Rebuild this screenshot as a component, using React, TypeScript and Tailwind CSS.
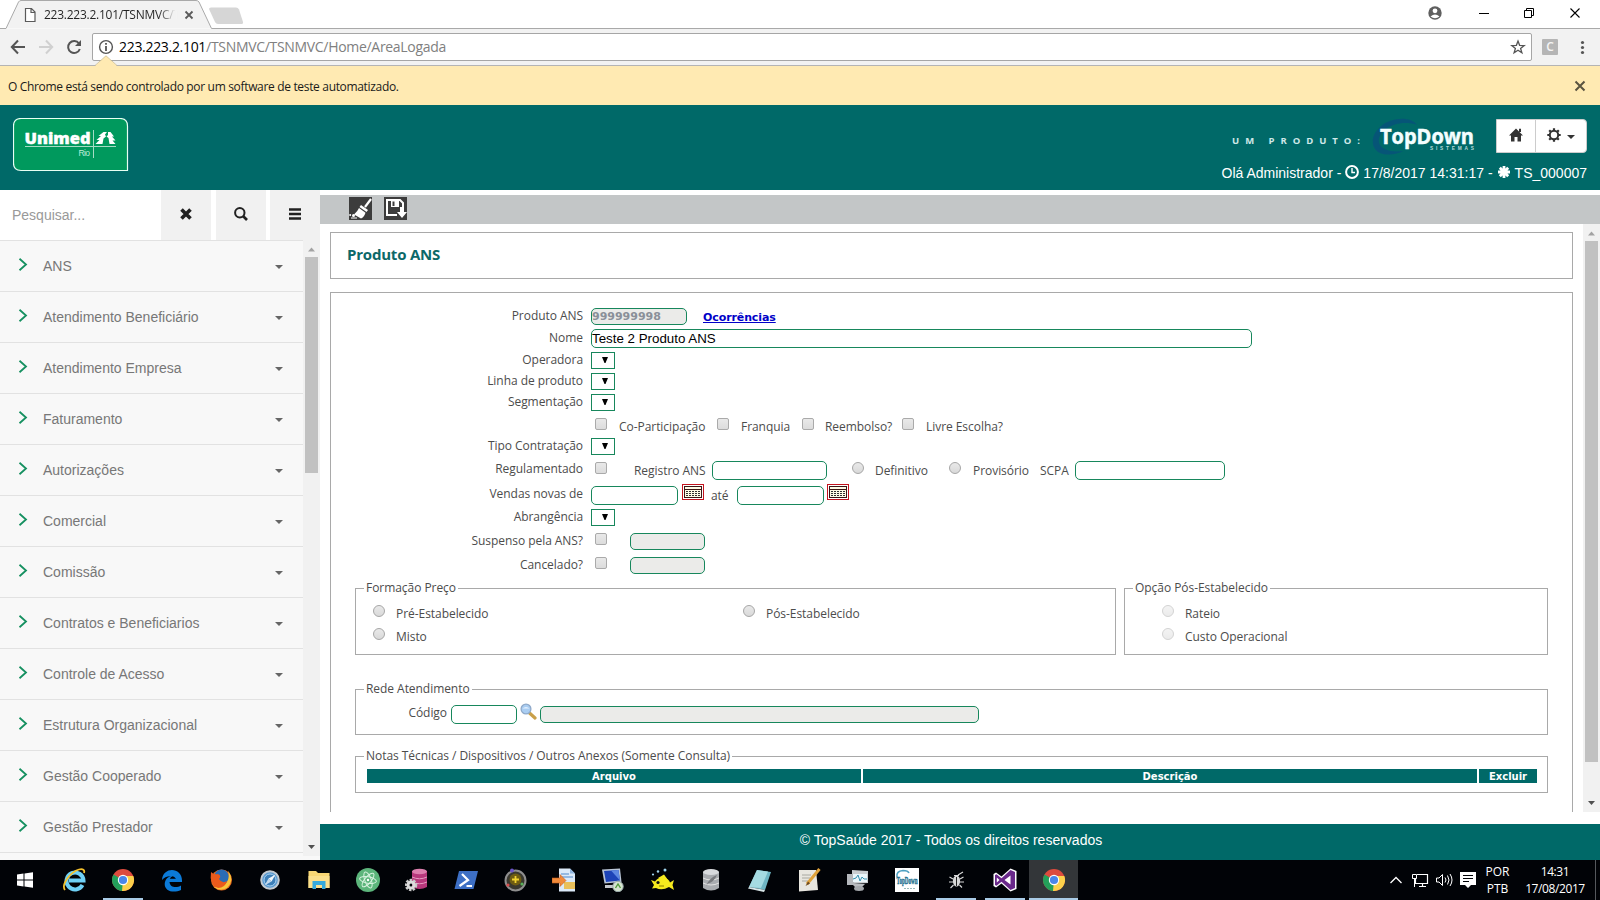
import type { ReactNode } from "react";

const menu = [
  "ANS",
  "Atendimento Beneficiário",
  "Atendimento Empresa",
  "Faturamento",
  "Autorizações",
  "Comercial",
  "Comissão",
  "Contratos e Beneficiarios",
  "Controle de Acesso",
  "Estrutura Organizacional",
  "Gestão Cooperado",
  "Gestão Prestador",
];

const ui = "font-['Open_Sans','Noto_Sans',sans-serif]";

/* ---------- browser chrome ---------- */

function TabStrip() {
  return (
    <div className="flex h-[29px] items-start bg-white">
      <div className="relative h-[29px] w-[1420px] shrink-0">
        <svg width="1420" height="29" className="block">
          <path d="M0 28.5H6L18.5 2Q19.5 .5 21 .5H196Q198 .5 199 2L211.500 28.500H1420" fill="#f2f2f2" stroke="#a9a9a9" />
          <path d="M211 7.500H236Q238 7.500 239 9.500L243 22Q243.500 24 241 24H218Q216 24 215 22L209 9Q209 7.500 211 7.500Z" fill="#d6d6d6" />
          <path d="M25.500 8.500H31.500L35 12V21.500H25.500ZM31 8.500V12.500H35" fill="#fff" stroke="#5a5a5a" strokeWidth="1.200" />
          <path d="M185.500 11.500L192.500 18.500M192.500 11.500L185.500 18.500" stroke="#5a5a5a" strokeWidth="1.800" />
        </svg>
        <div className={`absolute top-[6px] left-[44px] w-[134px] whitespace-nowrap bg-gradient-to-r from-[#222] from-85% to-[#f2f2f2] to-98% bg-clip-text text-[12px] leading-[17px] tracking-[-0.25px] text-transparent ${ui}`}>
          223.223.2.101/TSNMVC/T
        </div>
      </div>
      <svg width="180" height="29" className="block">
        <path d="M0 28.500H180" stroke="#a9a9a9" />
        <circle cx="15" cy="13" r="6.700" fill="#5f5f5f" />
        <circle cx="15" cy="10.800" r="2.400" fill="#fff" />
        <path d="M10.500 16.500Q15 12.500 19.500 16.500Q15 20 10.500 16.500Z" fill="#fff" />
        <path d="M59 13.500H69" stroke="#000" />
        <path d="M104.500 10.500H111.500V17.500H104.500ZM106.500 10.500V8.500H113.500V15.500H111.500" fill="none" stroke="#000" />
        <path d="M150.500 8.500L159.500 17.500M159.500 8.500L150.500 17.500" stroke="#000" strokeWidth="1.100" />
      </svg>
    </div>
  );
}

function AddressBar() {
  return (
    <div className="flex h-[37px] items-start border-b border-[#b4b4b4] bg-[#f2f2f2]">
      <svg width="92" height="36" className="block shrink-0">
        <path d="M12 18H25M18 11.500L11.800 18L18 24.500" fill="none" stroke="#555" strokeWidth="2" />
        <path d="M39 18H52M46 11.500L52.200 18L46 24.500" fill="none" stroke="#d0d0d0" strokeWidth="2" />
        <path d="M79 14.500A6 6 0 1 0 79.800 20" fill="none" stroke="#555" strokeWidth="2" />
        <path d="M81 11V17H75Z" fill="#555" />
      </svg>
      <div className="mt-[4px] flex h-[28px] w-[1440px] items-center rounded-[2px] border border-[#a6a6a6] bg-white">
        <svg width="26" height="26" className="block shrink-0">
          <circle cx="13" cy="13" r="6.400" fill="none" stroke="#555" strokeWidth="1.400" />
          <path d="M13 12V17M13 9V10.700" stroke="#555" strokeWidth="1.800" />
        </svg>
        <div className={`flex-1 whitespace-nowrap text-[14px] leading-[18px] tracking-[-0.31px] text-[#808080] ${ui}`}>
          <span className="text-black">223.223.2.101</span>/TSNMVC/TSNMVC/Home/AreaLogada
        </div>
        <svg width="26" height="26" className="block shrink-0">
          <path d="M13 7L14.600 11.300L19.200 11.500L15.600 14.400L16.900 18.800L13 16.300L9.100 18.800L10.400 14.400L6.800 11.500L11.400 11.300Z" fill="none" stroke="#555" strokeWidth="1.300" />
        </svg>
      </div>
      <div className="mt-[10px] ml-[10px] flex h-4 w-4 items-center justify-center rounded-[1px] bg-[#b5b5b5] font-['Open_Sans',sans-serif] text-[12px] leading-none font-semibold text-[#f4f4f4]">
        C
      </div>
      <svg width="40" height="36" className="block">
        <g fill="#555">
          <circle cx="24.500" cy="13.500" r="1.600" />
          <circle cx="24.500" cy="18.500" r="1.600" />
          <circle cx="24.500" cy="23.500" r="1.600" />
        </g>
      </svg>
    </div>
  );
}

function InfoBar() {
  return (
    <div className="relative flex h-[39px] items-center justify-between bg-[#ffeab2] pl-2">
      <svg width="22" height="12" className="absolute -top-[11px] left-[95px]">
        <path d="M0 11L11 .8L22 11V12H0Z" fill="#ffeab2" />
        <path d="M0 10.500L11 .8L22 10.500" fill="none" stroke="#c9b98a" strokeWidth=".7" />
      </svg>
      <span className={`mt-[2px] whitespace-nowrap text-[12px] leading-4 tracking-[-0.33px] text-[#1a1a1a] ${ui}`}>
        O Chrome está sendo controlado por um software de teste automatizado.
      </span>
      <svg width="40" height="39" className="block">
        <path d="M15.500 15.500L24.500 24.500M24.500 15.500L15.500 24.500" stroke="#5a5440" strokeWidth="2" />
      </svg>
    </div>
  );
}

/* ---------- application header ---------- */

function UnimedLogo() {
  return (
    <svg width="116" height="54" viewBox="0 0 116 54" className="block">
      <path d="M8 .5H107Q114.500 .5 114.500 8V52.500H8Q.5 52.500 .5 45V8Q.5 .5 8 .5Z" fill="#00995d" stroke="#e8fff4" strokeWidth="1.200" />
      <text x="11.500" y="26" fontFamily="Open Sans" fontWeight="800" fontSize="15.500" fill="#fff" stroke="#fff" strokeWidth=".4" textLength="66" lengthAdjust="spacingAndGlyphs">Unimed</text>
      <text x="65.500" y="37.500" fontFamily="Liberation Sans" fontSize="8.500" fill="#bfeeda" textLength="11.500">Rio</text>
      <path d="M12 28.500H103M80.500 12V40" stroke="#a6dcc4" />
      <path d="M90.500 14H94L92 16.500L93 18.500L90.500 20.500L89.500 26H82.500L86.500 22H83.500L88 18H85.500Z" fill="#fff" />
      <path d="M95 14H97.500L101 18.500H99L102.500 22.500H99.500L102.500 26H96.500L95.500 20L93.500 18.500L95 17Z" fill="#fff" />
    </svg>
  );
}

function TopDownLogo() {
  return (
    <svg width="250" height="40" viewBox="0 0 250 40" className="block">
      <path d="M189 7C183 -2 163 -1 152 9C141 19 143 33 155 36C162 37.500 170 36 175 33C164 34.500 153 32 151 25C149 15 162 5 177 5C182 5 186 5.500 189 7Z" fill="#07527a" opacity=".85" />
      <text x="4" y="25.500" fontFamily="Open Sans" fontWeight="700" fontSize="9.500" fill="#cfe8e8" textLength="128">UM PRODUTO:</text>
      <text x="152" y="26" fontFamily="Open Sans" fontWeight="700" fontSize="20.500" fill="#f4ffff" stroke="#f4ffff" strokeWidth=".5" textLength="94" lengthAdjust="spacingAndGlyphs">TopDown</text>
      <text x="202" y="31.500" fontFamily="Liberation Sans" fontWeight="700" fontSize="4.800" fill="#b6dada" textLength="44">SISTEMAS</text>
    </svg>
  );
}

function Header() {
  return (
    <header className="flex h-[85px] justify-between bg-[#006968]">
      <div className="pt-[13px] pl-[13px]">
        <UnimedLogo />
      </div>
      <div className="flex flex-col items-end pt-[14px] pr-[13px]">
        <div className="flex h-[34px]">
          <div className="mr-[18px] -mt-px">
            <TopDownLogo />
          </div>
          <div className="flex h-[34px] w-[91px] rounded-r-[4px] border border-[#ccc] bg-white">
            <div className="flex w-[39px] items-center justify-center border-r border-[#ccc] pb-[2px]">
              <svg width="14" height="14" viewBox="0 0 14 14">
                <path d="M7 .5L14 7.500H12V13.500H8.500V9H5.500V13.500H2V7.500H0ZM10 .8H12V4H10Z" fill="#333" />
              </svg>
            </div>
            <div className="flex flex-1 items-center justify-center gap-[6px] pb-[2px]">
              <svg width="14" height="14" viewBox="0 0 14 14">
                <circle cx="7" cy="7" r="4.200" fill="none" stroke="#333" strokeWidth="2" />
                <path d="M7 .3V2.500M7 11.500V13.700M.3 7H2.500M11.500 7H13.700M2.200 2.200L3.800 3.800M10.200 10.200L11.800 11.800M11.800 2.200L10.200 3.800M3.800 10.200L2.200 11.800" stroke="#333" strokeWidth="2.200" />
              </svg>
              <svg width="8" height="4" className="mt-[3px]">
                <path d="M0 0H8L4 4Z" fill="#333" />
              </svg>
            </div>
          </div>
        </div>
        <div className="mt-[10px] flex items-center gap-[4px] font-['Liberation_Sans',Arial,sans-serif] text-[14px] leading-5 whitespace-nowrap text-white">
          <span>Olá Administrador -</span>
          <svg width="14" height="14" viewBox="0 0 14 14" className="-mt-[2px]">
            <circle cx="7" cy="7" r="5.900" fill="none" stroke="#fff" strokeWidth="2" />
            <path d="M7 3V7.500H10" fill="none" stroke="#fff" strokeWidth="1.400" />
          </svg>
          <span>17/8/2017 14:31:17 -</span>
          <svg width="14" height="14" viewBox="0 0 14 14" className="-mt-[2px]">
            <path d="M7 1V13M1 7H13M2.800 2.800L11.200 11.200M11.200 2.800L2.800 11.200" stroke="#fff" strokeWidth="2.800" />
          </svg>
          <span>TS_000007</span>
        </div>
      </div>
    </header>
  );
}

/* ---------- sidebar ---------- */

function Sidebar() {
  return (
    <aside className="flex h-[670px] w-[320px] shrink-0 flex-col overflow-hidden font-['Liberation_Sans',Arial,sans-serif]">
      <div className="flex h-[50px] shrink-0 bg-white">
        <div className="w-[161px] pt-[15px] pl-[12px] text-[14px] leading-5 text-[#999]">Pesquisar...</div>
        <div className="mr-[5px] flex w-[50px] justify-center bg-[#f1f1f1] pt-[18px]">
          <svg width="12" height="12" viewBox="0 0 12 12">
            <path d="M1.500 1.500L10.500 10.500M10.500 1.500L1.500 10.500" stroke="#222" strokeWidth="3.600" />
          </svg>
        </div>
        <div className="mr-[4px] flex w-[50px] justify-center bg-[#f1f1f1] pt-[17px]">
          <svg width="14" height="14" viewBox="0 0 14 14">
            <circle cx="5.800" cy="5.800" r="4.700" fill="none" stroke="#222" strokeWidth="2" />
            <path d="M9 9L13 13" stroke="#222" strokeWidth="2.600" />
          </svg>
        </div>
        <div className="flex w-[50px] justify-center bg-[#f1f1f1] pt-[18px]">
          <svg width="12" height="12" viewBox="0 0 12 12">
            <path d="M0 1.500H12M0 6H12M0 10.500H12" stroke="#222" strokeWidth="2.600" />
          </svg>
        </div>
      </div>
      <div className="flex h-[620px] items-start bg-[#f8f8f8]">
        <ul className="h-[620px] w-[303px] overflow-hidden bg-[#f8f8f8]">
          {menu.map((m) => (
            <li key={m} className="flex h-[51px] items-center border-t border-[#e2e2e2] pl-[18px] text-[14px] leading-5 text-[#777]">
              <svg width="10" height="13" viewBox="0 0 10 13" className="-mt-[3px] mr-[15px] shrink-0">
                <path d="M1.500 .8L8 6.500L1.500 12.200" fill="none" stroke="#159060" strokeWidth="1.800" />
              </svg>
              <span className="flex-1 pb-px">{m}</span>
              <svg width="8" height="4" className="mt-[2px] mr-5">
                <path d="M0 0H8L4 4Z" fill="#666" />
              </svg>
            </li>
          ))}
          <li className="h-[8px] border-t border-[#e2e2e2]" />
        </ul>
        <ScrollBar height="h-[616px]" thumb="h-[216px]" />
      </div>
    </aside>
  );
}

function ScrollBar({ height, thumb }: { height: string; thumb: string }) {
  return (
    <div className={`flex w-[17px] shrink-0 flex-col items-center justify-between bg-[#f1f1f1] ${height}`}>
      <div className="flex w-full flex-col items-center">
        <svg width="17" height="17" className="block">
          <path d="M5 11.500H12L8.500 7.500Z" fill="#a3a3a3" />
        </svg>
        <div className={`w-[13px] bg-[#c1c1c1] ${thumb}`} />
      </div>
      <svg width="17" height="17" className="block">
        <path d="M5 6H12L8.500 10Z" fill="#505050" />
      </svg>
    </div>
  );
}

/* ---------- form ---------- */

const label = "font-['Open_Sans','Noto_Sans',sans-serif] text-[12px] leading-4 font-medium text-[#4c4c4c] whitespace-nowrap tracking-[-0.05px]";

function Row({ h, text, mt, children }: { h: string; text?: string; mt?: string; children?: ReactNode }) {
  return (
    <div className={`flex items-start ${h}`}>
      <div className={`w-[228px] shrink-0 text-right ${label} ${mt ?? ""}`}>{text}</div>
      <div className="flex items-start pl-[8px]">{children}</div>
    </div>
  );
}

function Field({ className, off, children }: { className: string; off?: boolean; children?: ReactNode }) {
  return (
    <div className={`shrink-0 rounded-[5px] border border-[#17875c] ${off ? "h-[17px] bg-[#ebebe9]" : "h-[19px] bg-white"} ${className}`}>
      {children}
    </div>
  );
}

function Select() {
  return (
    <div className="flex h-[17px] w-6 items-start justify-end border border-[#17875c] bg-white pt-[4px] pr-[6px]">
      <svg width="6" height="6">
        <path d="M0 0H6L3.500 6H2.500Z" fill="#000" />
      </svg>
    </div>
  );
}

function Check({ className = "" }: { className?: string }) {
  return <div className={`h-[12px] w-[12px] shrink-0 rounded-[2px] border border-[#aaa] bg-gradient-to-b from-[#e9e9e9] to-[#dcdcdc] ${className}`} />;
}

function Radio({ className = "" }: { className?: string }) {
  return <div className={`h-[12px] w-[12px] shrink-0 rounded-full border border-[#a6a6a6] bg-gradient-to-b from-[#e9e9e9] to-[#d9d9d9] ${className}`} />;
}

function L({ className = "", children }: { className?: string; children: ReactNode }) {
  return <span className={`${label} ${className}`}>{children}</span>;
}

function Calendar({ className = "" }: { className?: string }) {
  return (
    <svg width="22" height="16" viewBox="0 0 22 16" className={`block shrink-0 ${className}`}>
      <rect x=".5" y=".5" width="21" height="15" fill="#fff" stroke="#c4141e" />
      <rect x="2.500" y="2.500" width="17" height="11" fill="#fffbe6" stroke="#3a1515" />
      <path d="M3 5.500H19" stroke="#3a1515" />
      <path d="M4 7.500H18M4 9.500H18M4 11.500H18" stroke="#333" strokeDasharray="2 1" />
    </svg>
  );
}

function Fieldset({ title, className, children }: { title: string; className: string; children?: ReactNode }) {
  return (
    <fieldset className={`min-w-0 ${className}`}>
      <div className="relative h-full border border-[#a9a9a9]">
        <span className={`absolute -top-[9px] left-[8px] bg-white px-[2px] ${label}`}>{title}</span>
        {children}
      </div>
    </fieldset>
  );
}

function Form() {
  return (
    <div className="flex h-[588px]">
      <div className="flex-1 overflow-hidden bg-white pt-[8px] pr-[10px] pl-[10px]">
        <div className="h-[47px] border border-[#a9a9a9] pt-[11px] pl-[16px]">
          <h1 className="font-['Open_Sans','Noto_Sans',sans-serif] text-[15px] leading-5 font-bold tracking-[-0.2px] text-[#0c6868]">Produto ANS</h1>
        </div>
        <div className="mt-[13px] h-[560px] border border-[#a9a9a9] pt-[15px] pr-[24px] pl-[24px]">
          <Row h="h-[21px]" text="Produto ANS">
            <Field off className="w-[96px] font-['DejaVu_Sans',sans-serif] text-[11px] leading-[16px] font-bold text-[#8a9099]">
              999999998
            </Field>
            <a className="mt-[3px] ml-[16px] font-['DejaVu_Sans',sans-serif] text-[11px] leading-[14px] font-bold tracking-[-0.1px] text-[#0000c8] underline">Ocorrências</a>
          </Row>
          <Row h="h-[23px]" text="Nome" mt="mt-px">
            <Field className="w-[661px] font-['Liberation_Sans',Arial,sans-serif] text-[13.33px] leading-[17px] text-black">Teste 2 Produto ANS</Field>
          </Row>
          <Row h="h-[21px]" text="Operadora"><Select /></Row>
          <Row h="h-[21px]" text="Linha de produto"><Select /></Row>
          <Row h="h-[24px]" text="Segmentação"><Select /></Row>
          <Row h="h-[20px]">
            <Check className="ml-[4px]" />
            <L className="mt-px ml-[12px] w-[88px]">Co-Participação</L>
            <Check className="ml-[10px]" />
            <L className="mt-px ml-[12px] w-[50px]">Franquia</L>
            <Check className="ml-[11px]" />
            <L className="mt-px ml-[11px] w-[66px]">Reembolso?</L>
            <Check className="ml-[11px]" />
            <L className="mt-px ml-[12px]">Livre Escolha?</L>
          </Row>
          <Row h="h-[23px]" text="Tipo Contratação"><Select /></Row>
          <Row h="h-[25px]" text="Regulamentado">
            <Check className="mt-px ml-[4px]" />
            <L className="mt-[2px] ml-[27px] w-[78px]">Registro ANS</L>
            <Field className="w-[115px]" />
            <Radio className="mt-px ml-[25px]" />
            <L className="mt-[2px] ml-[11px] w-[74px]">Definitivo</L>
            <Radio className="mt-px" />
            <L className="mt-[2px] ml-[12px] w-[67px]">Provisório</L>
            <L className="mt-[2px] w-[35px]">SCPA</L>
            <Field className="w-[150px]" />
          </Row>
          <Row h="h-[23px]" text="Vendas novas de">
            <Field className="w-[87px]" />
            <Calendar className="-mt-[2px] ml-[4px]" />
            <L className="mt-[2px] ml-[7px] w-[26px]">até</L>
            <Field className="w-[87px]" />
            <Calendar className="-mt-[2px] ml-[3px]" />
          </Row>
          <Row h="h-[24px]" text="Abrangência"><Select /></Row>
          <Row h="h-[24px]" text="Suspenso pela ANS?">
            <Check className="ml-[4px]" />
            <Field off className="ml-[23px] w-[75px]" />
          </Row>
          <Row h="h-[31px]" text="Cancelado?">
            <Check className="ml-[4px]" />
            <Field off className="ml-[23px] w-[75px]" />
          </Row>
          <div className="flex justify-between">
            <Fieldset title="Formação Preço" className="h-[67px] w-[761px]">
              <div className="grid grid-cols-[370px_1fr] gap-y-[7px] pt-[16px] pl-[17px]">
                <div className="flex h-4"><Radio /><L className="mt-px ml-[11px]">Pré-Estabelecido</L></div>
                <div className="flex h-4"><Radio /><L className="mt-px ml-[11px]">Pós-Estabelecido</L></div>
                <div className="flex h-4"><Radio /><L className="mt-px ml-[11px]">Misto</L></div>
              </div>
            </Fieldset>
            <Fieldset title="Opção Pós-Estabelecido" className="h-[67px] w-[424px]">
              <div className="grid gap-y-[7px] pt-[16px] pl-[37px]">
                <div className="flex h-4"><Radio className="opacity-50" /><L className="mt-px ml-[11px]">Rateio</L></div>
                <div className="flex h-4"><Radio className="opacity-50" /><L className="mt-px ml-[11px]">Custo Operacional</L></div>
              </div>
            </Fieldset>
          </div>
          <Fieldset title="Rede Atendimento" className="mt-[34px] h-[46px]">
            <div className="flex items-start pt-[15px]">
              <L className="w-[91px] text-right">Código</L>
              <Field className="ml-[4px] w-[66px]" />
              <svg width="17" height="17" viewBox="0 0 17 17" className="-mt-[2px] ml-[3px] block">
                <path d="M9.500 10L15 15" stroke="#c9a04a" strokeWidth="3.200" strokeLinecap="round" />
                <circle cx="6" cy="6" r="4.900" fill="#a9cdf2" stroke="#8fa9c9" strokeWidth="1.300" />
                <path d="M2.500 5.500Q6 2.500 9.500 5.500Z" fill="#e6f2ff" />
              </svg>
              <Field off className="mt-px ml-[3px] w-[439px]" />
            </div>
          </Fieldset>
          <Fieldset title="Notas Técnicas / Dispositivos / Outros Anexos (Somente Consulta)" className="mt-[21px] h-[37px]">
            <div className="flex gap-[2px] pt-[12px] pr-[10px] pl-[11px] text-center font-['DejaVu_Sans',sans-serif] text-[10px] leading-[14px] font-bold text-white">
              <div className="h-[14px] w-[494px] bg-[#006968] pt-px">Arquivo</div>
              <div className="h-[14px] flex-1 bg-[#006968] pt-px">Descrição</div>
              <div className="h-[14px] w-[58px] bg-[#006968] pt-px">Excluir</div>
            </div>
          </Fieldset>
        </div>
      </div>
      <ScrollBar height="h-[588px]" thumb="h-[521px]" />
    </div>
  );
}

function ToolBar() {
  return (
    <div className="mt-[5px] flex h-[29px] gap-[12px] bg-[#c3c6c7] pt-[2px] pl-[29px]">
      <svg width="23" height="23" viewBox="0 0 23 23">
        <rect width="23" height="23" fill="#3c3c3c" />
        <path d="M22 2L16 10" stroke="#fff" strokeWidth="2.200" />
        <path d="M12 8L19 13L17.500 15L10.500 10Z" fill="#fff" />
        <path d="M10 11L16.500 15.800Q15 20.500 12 21.500L5 17.500Q8.500 14.500 10 11Z" fill="#fff" />
        <circle cx="4.500" cy="18.500" r="1.500" fill="#fff" />
        <circle cx="1.200" cy="18" r="1" fill="#fff" />
        <path d="M2 21H8" stroke="#fff" />
      </svg>
      <svg width="23" height="23" viewBox="0 0 23 23">
        <rect width="23" height="23" fill="#3c3c3c" />
        <path d="M13 18H3V3H16L19 6V11" fill="none" stroke="#fff" strokeWidth="2" />
        <path d="M7 3H15V10H7Z" fill="#fff" />
        <path d="M8.500 4.500H10.500V9H8.500Z" fill="#3c3c3c" />
        <path d="M16 10H20V15H23L18 21L13 15H16Z" fill="#fff" />
      </svg>
    </div>
  );
}

/* ---------- taskbar ---------- */

function Chrome() {
  return (
    <>
      <circle cx="12" cy="12" r="11" fill="#dd4b3e" />
      <path d="M12 12L2.500 6.500A11 11 0 0 0 11 23L16.500 14.500Z" fill="#23a05a" />
      <path d="M12 12L11 23A11 11 0 0 0 22.300 8H12Z" fill="#fcd04b" />
      <circle cx="12" cy="12" r="5.200" fill="#fff" />
      <circle cx="12" cy="12" r="4.100" fill="#4a86ea" />
    </>
  );
}

const icons: { line?: string; art: ReactNode }[] = [
  { art: <path d="M4 6.500L10.500 5.600V11.500H4ZM11.500 5.400L20 4.200V11.500H11.500ZM4 12.500H10.500V18.400L4 17.500ZM11.500 12.500H20V19.800L11.500 18.600Z" fill="#fff" /> },
  {
    art: (
      <>
        <path d="M20.500 17A8.500 8.500 0 1 1 21.500 12.500H7" fill="none" stroke="#6fd0f5" strokeWidth="4" />
        <path d="M3 22C-1 17 8 4 17 1.500C21 .5 23 2 22 5" fill="none" stroke="#f4c02c" strokeWidth="1.800" />
      </>
    ),
  },
  { line: "w-[40px]", art: <Chrome /> },
  {
    art: (
      <>
        <path d="M2 12C3 -2 23 -1 22 14H9.500C10 20 17 20 21 17.500V22C12 26 3 22 5 14C6 10 9 8.500 11 8.200C7 8 4 9.500 2 12Z" fill="#0b7ad8" />
        <path d="M9.700 10.800Q12.500 5.500 16 10.800Z" fill="#000207" />
      </>
    ),
  },
  {
    art: (
      <>
        <circle cx="12.500" cy="12" r="10.500" fill="#e66a1f" />
        <circle cx="12.500" cy="9" r="7.500" fill="#2a6cb5" />
        <path d="M19 2.500Q26 12 18 20Q11 24 5 19Q14 20 18 14Q21 9 19 2.500Z" fill="#f9c53a" />
        <path d="M2 4Q5 7 9 6Q13 8 10 11Q13 16 18 13Q16 20 9 20Q0 16 2 4Z" fill="#ea5a1c" />
      </>
    ),
  },
  {
    art: (
      <>
        <circle cx="12" cy="12" r="8.800" fill="#5a9ad0" stroke="#c4cad0" strokeWidth="2" />
        <circle cx="12" cy="12" r="6" fill="#3d7fb8" stroke="#a5d0f0" />
        <path d="M17.500 6.500L13.500 13.500L10.500 10.500Z" fill="#f2f7fb" />
        <path d="M6.500 17.500L13.500 13.500L10.500 10.500Z" fill="#c4d9ec" />
      </>
    ),
  },
  {
    art: (
      <>
        <path d="M1.500 3H9L11 5H22.500V20H1.500Z" fill="#f8d775" />
        <path d="M1.500 8H22.500V20H1.500Z" fill="#fbe08c" />
        <path d="M5.500 13H18.500V21H15V17H9V21H5.500Z" fill="#35aadc" />
      </>
    ),
  },
  {
    art: (
      <>
        <circle cx="12" cy="12" r="12" fill="#5cb57b" />
        <g fill="none" stroke="#d7f2df" strokeWidth="1">
          <ellipse cx="12" cy="12" rx="3.200" ry="8.500" transform="rotate(-20 12 12)" />
          <ellipse cx="12" cy="12" rx="3.200" ry="8.500" transform="rotate(40 12 12)" />
          <ellipse cx="12" cy="12" rx="3.200" ry="8.500" transform="rotate(100 12 12)" />
        </g>
        <circle cx="12" cy="12" r="1.200" fill="#fff" />
      </>
    ),
  },
  {
    art: (
      <>
        <path d="M7 3V19Q14.500 23 22 19V3Z" fill="#b8387c" />
        <ellipse cx="14.500" cy="3.500" rx="7.500" ry="2.800" fill="#dd7fae" />
        <path d="M7 9Q14.500 12.500 22 9M7 14Q14.500 17.500 22 14" fill="none" stroke="#e69ac0" />
        <circle cx="6" cy="17" r="5" fill="none" stroke="#c9c9c9" strokeWidth="2.600" strokeDasharray="2.400 1.200" />
        <circle cx="6" cy="17" r="3" fill="none" stroke="#dcdcdc" strokeWidth="3" />
      </>
    ),
  },
  {
    art: (
      <>
        <path d="M5 3H24L19.500 21H.5Z" fill="#3d6fc4" />
        <path d="M8 6L14 12L5.500 18M12.500 18H18" fill="none" stroke="#fff" strokeWidth="2.200" />
      </>
    ),
  },
  {
    art: (
      <>
        <circle cx="12.500" cy="12.500" r="10" fill="#39382f" stroke="#8e8e8e" strokeWidth="2" />
        <circle cx="12.500" cy="11.500" r="6" fill="#6e5c12" />
        <path d="M12.500 8V15M9 11.500H16" stroke="#f1d32f" strokeWidth="1.800" />
        <circle cx="9" cy="2.500" r="2" fill="#6a55c8" />
        <circle cx="5" cy="17" r="1.600" fill="#d64b4b" />
        <circle cx="19" cy="16" r="1.600" fill="#5ab05a" />
      </>
    ),
  },
  {
    art: (
      <>
        <path d="M7 .5H18L23 5.500V23.500H7Z" fill="#dbe9f8" />
        <path d="M18 .5V5.500H23Z" fill="#8fb5de" />
        <path d="M9 6H17M9 9H21" stroke="#7fa8d8" strokeWidth="1.500" />
        <path d="M12 14H23V21H12Z" fill="#e9c05b" />
        <path d="M0 10H8V6.500L14 12.500L8 18.500V15H0Z" fill="#f08a3a" stroke="#c85c1c" strokeWidth=".6" />
      </>
    ),
  },
  {
    art: (
      <>
        <path d="M1 1.500L19 .5L20.500 14L3.500 15.500Z" fill="#b9c5d6" />
        <path d="M3 3L17.500 2L19 12.500L5 14Z" fill="#1d44b8" />
        <path d="M10 2.500L17.500 2L19 12.500Z" fill="#5d88e2" />
        <path d="M4 17H14V20H4Z" fill="#c4c8cc" />
        <circle cx="17" cy="18.500" r="5.200" fill="#d5e4cf" stroke="#9aa" />
        <path d="M14.500 20L17 16L19.500 20" fill="none" stroke="#4f9d3a" strokeWidth="1.400" />
      </>
    ),
  },
  {
    art: (
      <>
        <path d="M1 12L5 13.500Q9 8 15 10Q19 11 20 14.500L24 12L22.500 17L24 22L19 19Q12 23 6 20L2 20.500L4 17Z" fill="#f6ea1e" />
        <path d="M8 10L14 6.500L18 12Z" fill="#f6ea1e" />
        <circle cx="8" cy="14.500" r="1.600" fill="#111" />
        <path d="M9 18H14" stroke="#8a7c00" />
        <circle cx="3" cy="6.500" r="1.100" fill="#9fd4ee" />
        <circle cx="8" cy="3.500" r="1.200" fill="#9fd4ee" />
        <circle cx="15" cy="2" r="1.500" fill="#9fd4ee" />
      </>
    ),
  },
  {
    art: (
      <>
        <path d="M4 4V20Q12 25 20 20V4Z" fill="#a9acb0" />
        <ellipse cx="12" cy="4" rx="8" ry="3" fill="#d8dadd" />
        <path d="M4 10Q12 14 20 10M4 15Q12 19 20 15" fill="none" stroke="#e2e2e2" />
        <path d="M7 18Q10 10 18 7Q15 14 9 15.500" fill="#77797d" />
      </>
    ),
  },
  {
    art: (
      <>
        <path d="M9 2L23 4L17 22L1 19Z" fill="#6fb6c4" />
        <path d="M9 2L20 3.500L13 20L1 19Z" fill="#a5dbe2" />
        <path d="M1 19L17 22L16 24L0 20.500Z" fill="#d9e6e8" />
      </>
    ),
  },
  {
    art: (
      <>
        <path d="M2 2H19L21 22L2 23.500Z" fill="#e8e6df" />
        <path d="M5 7H14M5 10H13M5 13H11" stroke="#a8a8a0" />
        <path d="M22.500 1L10 16" stroke="#e0a23a" strokeWidth="3" />
        <path d="M11 13.500L8.500 18L13 15.500Z" fill="#6b4a22" />
      </>
    ),
  },
  {
    art: (
      <>
        <path d="M6 2L22 3V15L6 16Z" fill="#c9cdd0" />
        <path d="M1 6H8V17H1Z" fill="#b4b8bc" />
        <path d="M7 6H21V14H7Z" fill="#eaf6fa" />
        <path d="M7 11L10 10L12 7L14 13L16 9L18 11H21" fill="none" stroke="#3791b0" />
        <path d="M6 16H19L16 19H9Z" fill="#b9bcc0" />
        <ellipse cx="13" cy="20.500" rx="5" ry="2.500" fill="#a4a8ac" />
      </>
    ),
  },
  {
    art: (
      <>
        <rect width="24" height="24" fill="#fff" />
        <path d="M2 9Q1 3 8 2.500Q13 2.500 14 5" fill="none" stroke="#4b9fc0" strokeWidth="1.500" />
        <text x="1.500" y="16" fontFamily="Liberation Sans Narrow" fontWeight="700" fontSize="10" fill="#1b6f8e" stroke="#1b6f8e" strokeWidth=".4" textLength="21" lengthAdjust="spacingAndGlyphs">TopDown</text>
        <path d="M9 20.500H20" stroke="#9bb" strokeDasharray="2 1" />
      </>
    ),
  },
  {
    line: "w-[40px]",
    art: (
      <>
        <ellipse cx="12.500" cy="13" rx="3.600" ry="5.500" fill="#d8d8d8" />
        <path d="M12.500 9V18" stroke="#222" />
        <path d="M10 7.500H15M9 11L5.500 9M9 14H5M9.500 17L6.500 20M16 11L19.500 9M16 14H20M15.500 17L18 19.500M14 7L19 4" stroke="#d8d8d8" strokeWidth="1.200" />
      </>
    ),
  },
  {
    line: "w-[40px]",
    art: (
      <>
        <path d="M17.500 .5L23.500 3V21L17.500 23.500L8.500 15.500L3 19.500L.5 18V6L3 4.500L8.500 8.500Z" fill="#fff" />
        <path d="M17.500 2L22 4V20L17.500 22L8.500 13.700L3.500 17.700L2 17V7L3.500 6.300L8.500 10.300ZM17.500 7.500L11.500 12L17.500 16.500ZM3.800 9.500V14.500L6.500 12Z" fill="#69288a" fillRule="evenodd" />
      </>
    ),
  },
  { line: "w-[49px]", art: <Chrome /> },
];

function Taskbar() {
  return (
    <div className="flex h-[40px] justify-between bg-[#010307]">
      <div className="flex">
        {icons.map((ic, i) => (
          <div key={i} className={`flex h-[40px] w-[49px] flex-col items-center pt-[8px] ${i === icons.length - 1 ? "bg-[#333639]" : ""}`}>
            <svg width="24" height="24" viewBox="0 0 24 24" className="block shrink-0">
              {ic.art}
            </svg>
            {ic.line && <div className={`mt-[6px] h-[2px] shrink-0 bg-[#a9cbe6] ${ic.line}`} />}
          </div>
        ))}
      </div>
      <div className={`flex text-center text-[12px] leading-[17px] text-white ${ui}`}>
        <svg width="90" height="40" viewBox="0 0 90 40" className="block">
          <path d="M4.500 23L10 17.500L15.500 23" fill="none" stroke="#fff" strokeWidth="1.300" />
          <path d="M31 14.500H41.500V23.500H29.500V19M33 26.500H40M36.500 23.500V26.500" fill="none" stroke="#fff" strokeWidth="1.200" />
          <path d="M26.500 14.500H30.500V18.500H26.500ZM28.500 18.500V27" fill="none" stroke="#fff" />
          <path d="M50.500 18H53L56.500 14.500V25.500L53 22H50.500ZM59 17.500Q61 20 59 22.500M61.500 15.500Q64.500 20 61.500 24.500M64 14Q68 20 64 26" fill="none" stroke="#fff" />
          <path d="M74 12H90V25H85L82 28L79 25H74Z" fill="#fff" />
          <path d="M77 15.500H87M77 18.500H87M77 21.500H83" stroke="#010307" />
        </svg>
        <div className="mt-[3px] w-[43px]">
          <div>POR</div>
          <div>PTB</div>
        </div>
        <div className="mt-[3px] ml-[4px] w-[64px] tracking-[-0.4px] whitespace-nowrap">
          <div>14:31</div>
          <div>17/08/2017</div>
        </div>
        <div className="ml-[8px] w-[5px] border-l border-[#55585c]" />
      </div>
    </div>
  );
}

export default function App() {
  return (
    <div className="flex h-[900px] w-[1600px] flex-col overflow-hidden bg-white">
      <TabStrip />
      <AddressBar />
      <InfoBar />
      <Header />
      <div className="flex h-[670px]">
        <Sidebar />
        <main className="flex flex-1 flex-col">
          <ToolBar />
          <Form />
          <footer className="mt-[12px] flex h-[36px] items-center justify-center bg-[#006968] pr-[18px] pb-[3px] font-['Liberation_Sans',Arial,sans-serif] text-[14px] text-white">
            © TopSaúde 2017 - Todos os direitos reservados
          </footer>
        </main>
      </div>
      <Taskbar />
    </div>
  );
}
